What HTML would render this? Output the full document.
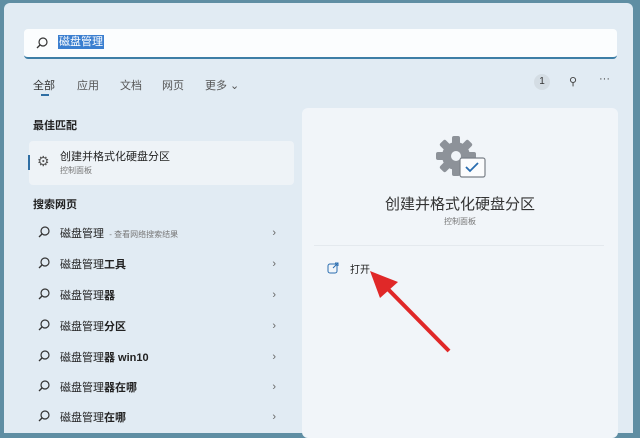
<!DOCTYPE html><html><head><meta charset="utf-8"><style>
body{margin:0;width:640px;height:427px;overflow:hidden;background:#5f8ea3;font-family:"Liberation Sans","Noto Sans CJK SC",sans-serif;}
.win{position:absolute;left:4px;top:3px;width:629px;height:430px;background:#e1ebf3;border-radius:6px 6px 0 0;}
.abs{position:absolute;}
.search{left:20px;top:26px;width:593px;height:28px;background:#fbfdfe;border-bottom:2px solid #3d7ea6;border-radius:4px;}
.tab{top:74px;font-size:11px;color:#555;}
.h{font-size:11px;font-weight:bold;color:#222;}
.row{left:30px;font-size:11px;color:#222;width:250px;height:20px;}
.row .ic{position:absolute;left:4px;top:3px;}
.row .t{position:absolute;left:26px;top:2px;}
.row .c{position:absolute;right:8px;top:4px;color:#666;font-size:11px;}
</style></head><body>
<div class="win">
<div class="abs search">
<svg class="abs" style="left:12px;top:8px" width="12" height="12"><circle cx="7" cy="5" r="4" fill="none" stroke="#333" stroke-width="1.2"/><line x1="4" y1="8" x2="1" y2="11" stroke="#333" stroke-width="1.3"/></svg>
<span class="abs" style="left:34px;top:6px;background:#3b7fd0;color:#fff;font-size:11px;line-height:14px;padding:0 1px">磁盘管理</span>
</div>
<span class="abs tab" style="left:29px;color:#333">全部</span>
<div class="abs" style="left:37px;top:91px;width:8px;height:2px;background:#2f6ea3"></div>
<span class="abs tab" style="left:73px">应用</span>
<span class="abs tab" style="left:116px">文档</span>
<span class="abs tab" style="left:158px">网页</span>
<span class="abs tab" style="left:201px">更多 ⌄</span>
<div class="abs" style="left:530px;top:71px;width:16px;height:16px;border-radius:8px;background:#d4dde4;font-size:10px;text-align:center;line-height:16px;color:#333">1</div>
<span class="abs" style="left:565px;top:72px;font-size:11px;color:#444">⚲</span>
<span class="abs" style="left:595px;top:70px;font-size:11px;color:#444">···</span>
<span class="abs h" style="left:29px;top:114px">最佳匹配</span>
<div class="abs" style="left:25px;top:138px;width:265px;height:44px;background:#eef3f7;border-radius:4px"></div>
<div class="abs" style="left:24px;top:152px;width:2px;height:15px;background:#2f6ea3"></div>
<span class="abs" style="left:33px;top:150px;font-size:14px;color:#555">⚙</span>
<span class="abs" style="left:56px;top:145px;font-size:11px;color:#222">创建并格式化硬盘分区</span>
<span class="abs" style="left:56px;top:162px;font-size:8px;color:#777">控制面板</span>
<span class="abs h" style="left:29px;top:193px">搜索网页</span>
<div class="abs row" style="top:220px"><svg class="ic" width="12" height="12"><circle cx="7" cy="5" r="4" fill="none" stroke="#333" stroke-width="1.2"/><line x1="4" y1="8" x2="1" y2="11" stroke="#333" stroke-width="1.3"/></svg><span class="t">磁盘管理 <span style="font-size:8px;color:#777">&nbsp;- 查看网络搜索结果</span></span><span class="c">›</span></div>
<div class="abs row" style="top:251px"><svg class="ic" width="12" height="12"><circle cx="7" cy="5" r="4" fill="none" stroke="#333" stroke-width="1.2"/><line x1="4" y1="8" x2="1" y2="11" stroke="#333" stroke-width="1.3"/></svg><span class="t">磁盘管理<b>工具</b></span><span class="c">›</span></div>
<div class="abs row" style="top:282px"><svg class="ic" width="12" height="12"><circle cx="7" cy="5" r="4" fill="none" stroke="#333" stroke-width="1.2"/><line x1="4" y1="8" x2="1" y2="11" stroke="#333" stroke-width="1.3"/></svg><span class="t">磁盘管理<b>器</b></span><span class="c">›</span></div>
<div class="abs row" style="top:313px"><svg class="ic" width="12" height="12"><circle cx="7" cy="5" r="4" fill="none" stroke="#333" stroke-width="1.2"/><line x1="4" y1="8" x2="1" y2="11" stroke="#333" stroke-width="1.3"/></svg><span class="t">磁盘管理<b>分区</b></span><span class="c">›</span></div>
<div class="abs row" style="top:344px"><svg class="ic" width="12" height="12"><circle cx="7" cy="5" r="4" fill="none" stroke="#333" stroke-width="1.2"/><line x1="4" y1="8" x2="1" y2="11" stroke="#333" stroke-width="1.3"/></svg><span class="t">磁盘管理<b>器 win10</b></span><span class="c">›</span></div>
<div class="abs row" style="top:374px"><svg class="ic" width="12" height="12"><circle cx="7" cy="5" r="4" fill="none" stroke="#333" stroke-width="1.2"/><line x1="4" y1="8" x2="1" y2="11" stroke="#333" stroke-width="1.3"/></svg><span class="t">磁盘管理<b>器在哪</b></span><span class="c">›</span></div>
<div class="abs row" style="top:404px"><svg class="ic" width="12" height="12"><circle cx="7" cy="5" r="4" fill="none" stroke="#333" stroke-width="1.2"/><line x1="4" y1="8" x2="1" y2="11" stroke="#333" stroke-width="1.3"/></svg><span class="t">磁盘管理<b>在哪</b></span><span class="c">›</span></div>
<div class="abs" style="left:298px;top:105px;width:316px;height:330px;background:#f1f5f9;border-radius:6px">
<svg class="abs" style="left:132px;top:26px" width="56" height="46" viewBox="0 0 56 46">
<g fill="#8d9299"><circle cx="22" cy="22" r="14"/><rect x="18" y="2" width="8" height="40" rx="2"/><rect x="2" y="18" width="40" height="8" rx="2"/><rect x="18" y="2" width="8" height="40" rx="2" transform="rotate(45 22 22)"/><rect x="18" y="2" width="8" height="40" rx="2" transform="rotate(-45 22 22)"/></g>
<circle cx="22" cy="22" r="5" fill="#f1f5f9"/>
<rect x="26" y="24" width="25" height="19" rx="2" fill="#fbfcfd" stroke="#7a8088" stroke-width="1.2"/>
<path d="M32 33 l4 4 l8 -8" fill="none" stroke="#2a6db0" stroke-width="1.8"/>
</svg>
<div class="abs" style="left:0;width:316px;top:85px;text-align:center;font-size:15px;color:#333">创建并格式化硬盘分区</div>
<div class="abs" style="left:0;width:316px;top:108px;text-align:center;font-size:8px;color:#777">控制面板</div>
<div class="abs" style="left:12px;top:137px;width:290px;height:1px;background:#e4e9ee"></div>
<svg class="abs" style="left:25px;top:154px" width="12" height="12"><rect x="1" y="2" width="9" height="9" rx="2" fill="none" stroke="#2a6db0"/><path d="M6 6 L11 1 M8 1 H11 V4" stroke="#2a6db0" fill="none"/></svg>
<span class="abs" style="left:48px;top:153px;font-size:10px;color:#222">打开</span>
<svg class="abs" style="left:60px;top:160px" width="100" height="100"><line x1="87" y1="83" x2="20" y2="15" stroke="#e02828" stroke-width="4"/><polygon points="8,3 36,14 18,30" fill="#e02828"/></svg>
</div>
</div>
</body></html>
